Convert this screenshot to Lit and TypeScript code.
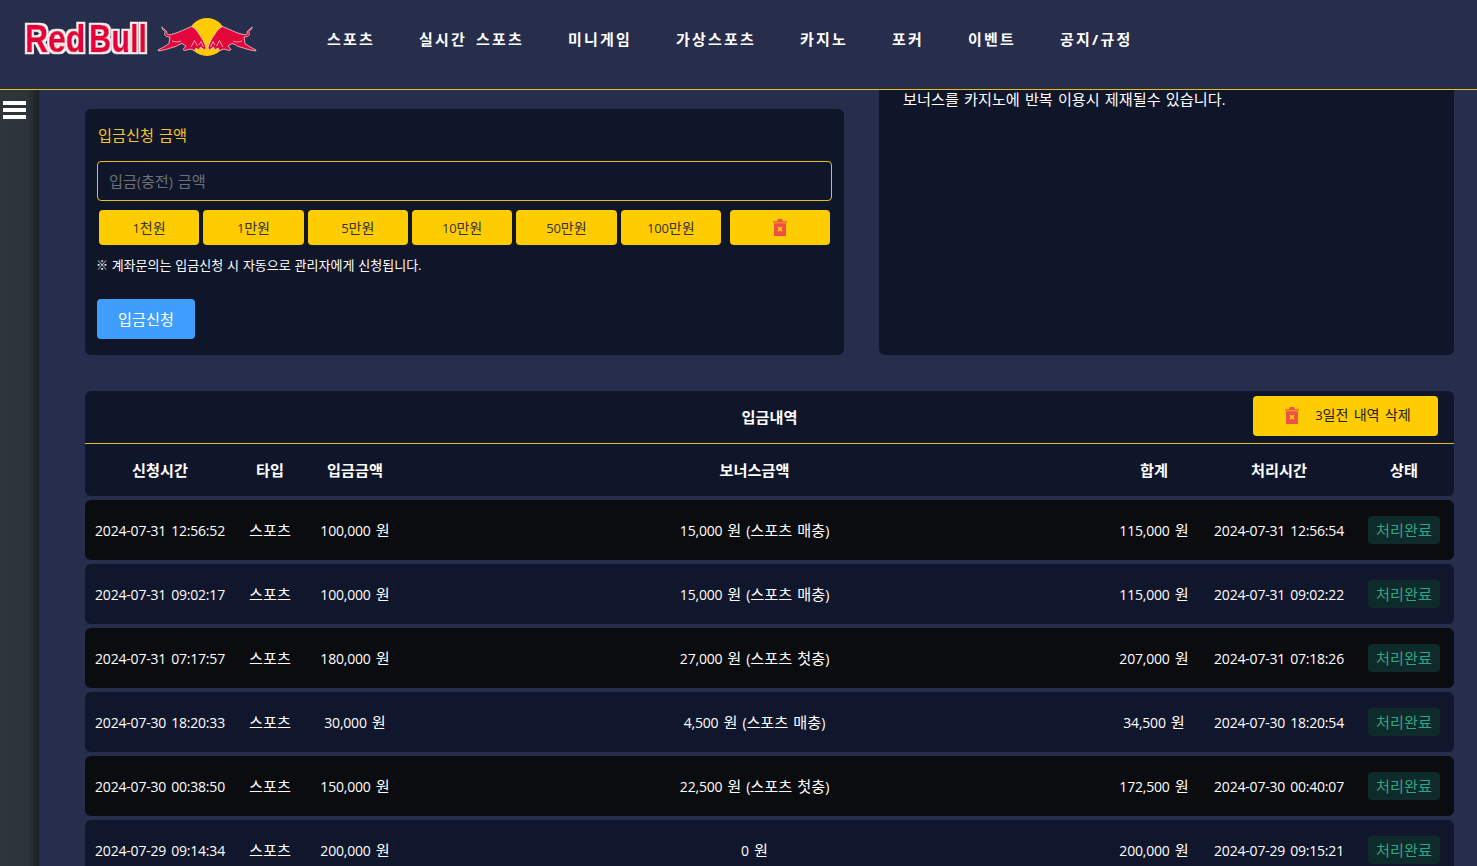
import { LitElement, html, css, svg } from "lit";
import { customElement } from "lit/decorators.js";

const NAV = ["스포츠", "실시간 스포츠", "미니게임", "가상스포츠", "카지노", "포커", "이벤트", "공지/규정"];
const AMOUNTS = ["1천원", "1만원", "5만원", "10만원", "50만원", "100만원"];
const COLS = ["신청시간", "타입", "입금금액", "보너스금액", "합계", "처리시간", "상태"];
const ROWS = [
  ["2024-07-31 12:56:52", "100,000 원", "15,000 원 (스포츠 매충)", "115,000 원", "2024-07-31 12:56:54"],
  ["2024-07-31 09:02:17", "100,000 원", "15,000 원 (스포츠 매충)", "115,000 원", "2024-07-31 09:02:22"],
  ["2024-07-31 07:17:57", "180,000 원", "27,000 원 (스포츠 첫충)", "207,000 원", "2024-07-31 07:18:26"],
  ["2024-07-30 18:20:33", "30,000 원", "4,500 원 (스포츠 매충)", "34,500 원", "2024-07-30 18:20:54"],
  ["2024-07-30 00:38:50", "150,000 원", "22,500 원 (스포츠 첫충)", "172,500 원", "2024-07-30 00:40:07"],
  ["2024-07-29 09:14:34", "200,000 원", "0 원", "200,000 원", "2024-07-29 09:15:21"],
];

/* The reference's Hangul is set wider than the installed CJK face, so Hangul runs get their own size. */
const t = (s: string) =>
  s.split(/([\uac00-\ud7a3]+)/).map((p, i) => (i % 2 ? html`<span class="k">${p}</span>` : p));

const trash = svg`<svg class="trash" viewBox="0 0 14 17" width="14" height="17" aria-hidden="true">
  <path fill="#ef4f4a" d="M0 2.2h14v1.3H0zM4.6 1 5.4 0h3.2l.8 1 .4 1.2H4.2zM1 4.3h12V16a1 1 0 0 1-1 1H2a1 1 0 0 1-1-1z"/>
  <path fill="none" stroke="#ffcc00" stroke-width="1.8" d="M5 8.2l4 4M9 8.2l-4 4"/>
</svg>`;

const bull = svg`
  <path d="M12 14C8 14 5.500 12 7 9.500C7.500 8 4.500 7.500 3.700 4L5.800 6C7.500 7.500 9.500 8 8.800 10.500C8.800 11.500 10.500 12 13 11.500C20 10 27 6 33.500 3.500C37 5 39 7.500 41 11C44 15 47 20 48 25L46.500 27L42.500 24L41 27L38 25L36.500 27.500L32 26L27 27.500L25 26.500L28 23L24 20.500L21 21.500C19 23 17 24 14 24.500C10 26 6 27 .5 28L0 27C4 25 8 23 11 20.500C11.500 18 11.500 16 12 14Z"
    fill="#e3063a" stroke="#f5cdd6" stroke-width=".8" stroke-linejoin="round"/>
  <path d="M33 24L36.500 17.500L39.500 23M41 22L43 18.500L45.500 24M14 18C17 19 20 19.500 23 18" fill="none" stroke="#fbdfe5" stroke-width=".7"/>`;

@customElement("app-root")
export class AppRoot extends LitElement {
  static styles = css`
    :host {
      display: block;
      height: 866px;
      overflow: hidden;
      background: #272d4c;
      color: #fff;
      font-family: "Open Sans", "Noto Sans CJK KR", sans-serif;
      letter-spacing: -0.2px;
      word-spacing: 0.1em;
    }
    * { box-sizing: border-box; }
    .k { font-size: 1.085em; line-height: 1; letter-spacing: 0; }
    .top {
      height: 90px;
      display: flex;
      align-items: center;
      background: #272e4c;
      border-bottom: 1px solid #e8bd20;
    }
    .brand {
      width: 327px;
      flex: none;
      display: flex;
      align-items: center;
      padding: 0 0 15px 24px;
    }
    .logo { display: block; overflow: visible; }
    .wordmark {
      font-family: "Liberation Sans", sans-serif;
      font-weight: 700;
      font-size: 39px;
      letter-spacing: 0;
      fill: #e3063a;
      stroke: #e3063a;
      stroke-width: 0.7px;
    }
    nav { display: flex; gap: 44px; padding-bottom: 12px; }
    nav a {
      font-size: 15px;
      font-weight: 700;
      letter-spacing: 2.2px;
      word-spacing: 2.9px;
      color: #fff;
      white-space: nowrap;
    }
    .body { display: flex; height: 776px; }
    .side {
      width: 39px;
      flex: none;
      background: linear-gradient(to right, #2f363b 0%, #2d3439 70%, #1d2025 100%);
      padding: 11px 3px;
      display: flex;
      flex-direction: column;
      gap: 3px;
    }
    .side i { display: block; width: 23px; height: 4px; background: #fff; }
    main { flex: 1; min-width: 0; padding: 0 23px 0 46px; }
    .forms { display: flex; gap: 35px; height: 265px; }
    .card { background: #10162a; border-radius: 6px; }
    .deposit {
      width: 759px;
      flex: none;
      margin-top: 19px;
      padding: 17px 12px 16px;
    }
    .label { font-size: 14px; line-height: 19px; color: #f5c52d; padding-left: 1px; }
    .input {
      margin-top: 16px;
      height: 40px;
      display: flex;
      align-items: center;
      padding: 0 11px;
      border: 1px solid #e8bd20;
      border-radius: 4px;
      font-size: 14px;
      color: #6c7077;
    }
    .amounts { display: flex; gap: 4px; margin-top: 9px; padding: 0 2px; }
    .amounts button {
      flex: 1;
      height: 35px;
      border: 0;
      border-radius: 4px;
      background: #ffcc00;
      color: #333;
      font: inherit;
      font-size: 13px;
      letter-spacing: inherit;
      display: flex;
      align-items: center;
      justify-content: center;
      padding: 0;
    }
    .amounts button.del { flex: none; width: 100px; margin-left: 5px; }
    .note { margin-top: 12px; margin-left: -1px; font-size: 12px; line-height: 17px; color: #fff; word-spacing: 0.075em; }
    .submit {
      margin-top: 25px;
      width: 98px;
      height: 40px;
      border: 0;
      border-radius: 4px;
      background: #409eff;
      color: #fff;
      font: inherit;
      font-size: 14px;
      letter-spacing: inherit;
      padding: 0;
    }
    .info {
      flex: 1;
      border-radius: 0 0 6px 6px;
      padding: 1px 24px 0;
      font-size: 14px;
      line-height: 17px;
    }
    .head { margin-top: 36px; height: 105px; border-radius: 6px; }
    .title {
      height: 53px;
      display: grid;
      grid-template-columns: 1fr auto 1fr;
      align-items: center;
      border-bottom: 1px solid #e8bd20;
      font-size: 14px;
      font-weight: 700;
    }
    .title b { grid-column: 2; font-weight: 700; }
    .title button {
      grid-column: 3;
      justify-self: end;
      margin: 0 16px 2px 0;
      width: 185px;
      height: 40px;
      border: 0;
      border-radius: 4px;
      background: #ffcc00;
      color: #222;
      font: inherit;
      font-size: 13px;
      font-weight: 400;
      letter-spacing: inherit;
      display: flex;
      align-items: center;
      justify-content: center;
      gap: 16px;
      padding: 0 0 2px 5px;
    }
    .title button span { word-spacing: 2px; }
    .grid {
      display: grid;
      grid-template-columns: 150px 70px 100px 1fr 100px 150px 100px;
      align-items: center;
      justify-items: center;
      font-size: 14px;
      white-space: nowrap;
    }
    .cols { height: 52px; font-weight: 700; }
    .rows { display: flex; flex-direction: column; gap: 4px; margin-top: 4px; }
    .row { height: 60px; flex: none; background: #10162b; border-radius: 6px; }
    .row:nth-child(odd) { background: #0a0c10; }
    .badge {
      width: 72px;
      height: 28px;
      padding-top: 2px;
      border-radius: 4px;
      background: #0e2a2a;
      color: #2ea67f;
      display: flex;
      align-items: center;
      justify-content: center;
    }
  `;

  render() {
    return html`
      <header class="top">
        <div class="brand">
          <svg class="logo" width="233" height="40" viewBox="0 0 233 40" role="img" aria-label="Red Bull">
            <defs>
              <filter id="halo" x="-10%" y="-10%" width="120%" height="120%">
                <feMorphology in="SourceAlpha" operator="dilate" radius="1.5" result="grown"/>
                <feFlood flood-color="#f6eef0"/>
                <feComposite in2="grown" operator="in" result="edge"/>
                <feMerge><feMergeNode in="edge"/><feMergeNode in="SourceGraphic"/></feMerge>
              </filter>
            </defs>
            <g filter="url(#halo)">
              <text class="wordmark" transform="translate(1 35) scale(.82 1)">Red</text>
              <text class="wordmark" transform="translate(65 35) scale(.79 1)">Bull</text>
            </g>
            <circle cx="183" cy="20" r="19" fill="#ffcc00"/>
            <g transform="translate(134 6)">${bull}</g>
            <g transform="translate(232 6) scale(-1 1)">${bull}</g>
          </svg>
        </div>
        <nav>${NAV.map((n) => html`<a>${n}</a>`)}</nav>
      </header>
      <div class="body">
        <aside class="side"><i></i><i></i><i></i></aside>
        <main>
          <section class="forms">
            <div class="card deposit">
              <div class="label">${t("입금신청 금액")}</div>
              <div class="input"><span>${t("입금(충전) 금액")}</span></div>
              <div class="amounts">
                ${AMOUNTS.map((a) => html`<button><span>${t(a)}</span></button>`)}
                <button class="del">${trash}</button>
              </div>
              <div class="note">${t("※ 계좌문의는 입금신청 시 자동으로 관리자에게 신청됩니다.")}</div>
              <button class="submit">${t("입금신청")}</button>
            </div>
            <div class="card info">${t("보너스를 카지노에 반복 이용시 제재될수 있습니다.")}</div>
          </section>
          <section class="card head">
            <div class="title">
              <b>${t("입금내역")}</b>
              <button>${trash}<span>${t("3일전 내역 삭제")}</span></button>
            </div>
            <div class="grid cols">${COLS.map((c) => html`<div>${t(c)}</div>`)}</div>
          </section>
          <section class="rows">
            ${ROWS.map(
              (r) => html`<div class="grid row">
                <div>${t(r[0])}</div>
                <div>${t("스포츠")}</div>
                <div>${t(r[1])}</div>
                <div>${t(r[2])}</div>
                <div>${t(r[3])}</div>
                <div>${t(r[4])}</div>
                <div class="badge">${t("처리완료")}</div>
              </div>`
            )}
          </section>
        </main>
      </div>
    `;
  }
}
